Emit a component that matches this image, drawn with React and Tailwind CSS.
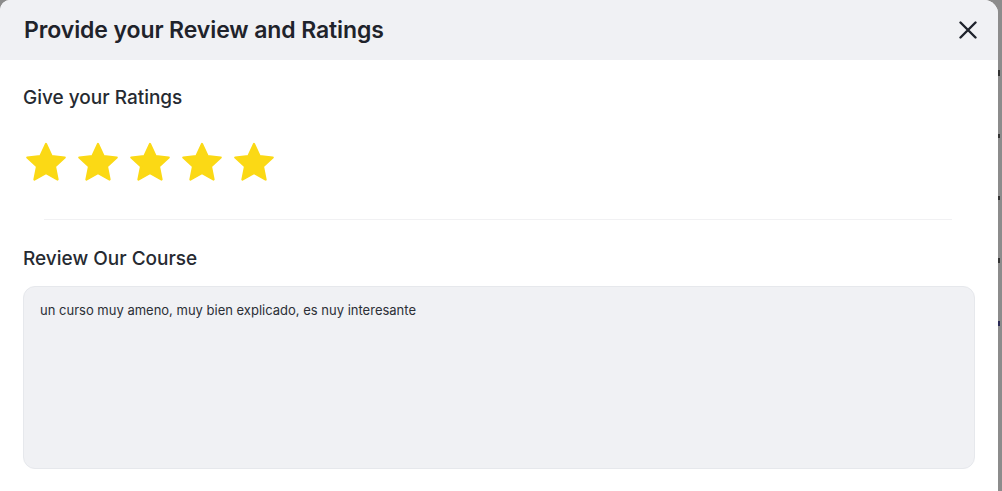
import React from "react";

function Star() {
  return (
    <svg width="44" height="42" viewBox="0 0 24 23" className="block">
      <path
        d="M12 1.6l3.05 6.6 7.2.85-5.33 4.93 1.42 7.12L12 17.5l-6.34 3.6 1.42-7.12L1.75 9.05l7.2-.85z"
        fill="#fbd915"
        stroke="#fbd915"
        strokeWidth="1.2"
        strokeLinejoin="round"
      />
    </svg>
  );
}

export default function App() {
  return (
    <div
      className="w-[1002px] h-[491px] bg-[#8c8c8c] flex overflow-hidden"
      style={{ fontFamily: "Inter, 'Noto Sans', sans-serif" }}
    >
      <div className="w-[998px] h-full bg-white rounded-tl-[10px] rounded-tr-[14px] overflow-hidden flex flex-col">
        <div className="h-[60px] bg-[#f0f1f4] flex items-center justify-between pl-[24px] pr-[21px]">
          <h1 className="text-[23px] font-semibold text-[#1f232b] tracking-[-0.1px]">
            Provide your Review and Ratings
          </h1>
          <svg width="18" height="18" viewBox="0 0 18 18" className="block -mt-[1px]">
            <path d="M1.5 1.5L16.5 16.5M16.5 1.5L1.5 16.5" stroke="#1f232b" strokeWidth="2.4" strokeLinecap="round" />
          </svg>
        </div>
        <div className="px-[23px] pt-[26px]">
          <h2 className="text-[19px] font-medium text-[#262a31] leading-[24px]">Give your Ratings</h2>
          <div className="flex gap-[8px] mt-[31px] ml-[1px]">
            <Star />
            <Star />
            <Star />
            <Star />
            <Star />
          </div>
          <div className="mt-[36px] mx-[21px] w-[908px] h-px bg-[#f1f1f3]" />
          <h2 className="mt-[27px] text-[19px] font-medium text-[#262a31] leading-[24px]">Review Our Course</h2>
          <div className="mt-[15px] w-[952px] h-[183px] bg-[#f0f1f4] border border-[#e6e8ec] rounded-[12px] px-[16px] pt-[14px]">
            <p className="text-[13px] text-[#2b2f36]">
              un curso muy ameno, muy bien explicado, es nuy interesante
            </p>
          </div>
        </div>
      </div>
      <div className="flex-1 flex flex-col pt-[70px] gap-[58px] items-start">
        <div className="w-[2px] h-[6px] bg-[#333]" />
        <div className="w-[2px] h-[4px] bg-[#333]" />
        <div className="w-[2px] h-[4px] bg-[#333]" />
        <div className="w-[2px] h-[5px] bg-[#333]" />
        <div className="w-[2px] h-[5px] bg-[#2a2a55]" />
      </div>
    </div>
  );
}
